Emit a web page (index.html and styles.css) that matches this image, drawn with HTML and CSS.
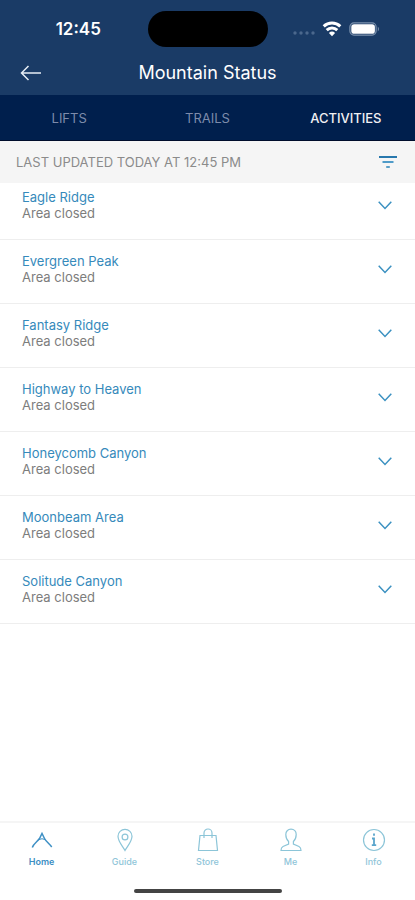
FILE: index.html
```html
<!DOCTYPE html>
<html lang="en">
<head>
<meta charset="utf-8">
<meta name="viewport" content="width=device-width, initial-scale=1">
<title>Mountain Status</title>
<link rel="stylesheet" href="styles.css">
</head>
<body>
<header class="header">
  <div class="status">
    <span class="clock">12:45</span>
    <span class="island"></span>
    <span class="indicators">
      <svg class="signal" viewBox="0 0 22 6" width="22" height="6"><g fill="#4b688d"><circle cx="2" cy="3" r="1.7"/><circle cx="8" cy="3" r="1.7"/><circle cx="14" cy="3" r="1.7"/><circle cx="20" cy="3" r="1.7"/></g></svg>
      <svg viewBox="0 0 20 16" width="20" height="16" fill="none" stroke="#fff" stroke-width="3"><path d="M1.700 5.400a12 12 0 0 1 16.600 0"/><path d="M4.700 9.200a7.700 7.700 0 0 1 10.600 0"/><path d="M10 15.200 6.900 12a4.500 4.500 0 0 1 6.200 0z" fill="#fff" stroke="none"/></svg>
      <svg viewBox="0 0 32 14" width="32" height="14"><rect x=".9" y=".9" width="26.2" height="12.2" rx="4" fill="none" stroke="#7c92ae" stroke-width="1.2"/><rect x="2.3" y="2.3" width="23.6" height="9.4" rx="2.8" fill="#fff"/><path d="M28.8 4.500q2.400 2.500 0 5z" fill="#7c92ae"/></svg>
    </span>
  </div>
  <div class="titlebar">
    <button class="back" type="button" aria-label="Back"><svg viewBox="0 0 22 16" width="22" height="16" fill="none" stroke="#e6edf5" stroke-width="1.5"><path d="M21 8H1.500M8.500 1 1.500 8l7 7"/></svg></button>
    <h1>Mountain Status</h1>
  </div>
</header>
<nav class="tabs" aria-label="Status type">
  <button type="button">LIFTS</button>
  <button type="button">TRAILS</button>
  <button type="button" class="selected">ACTIVITIES</button>
</nav>
<div class="updated">
  <span>LAST UPDATED TODAY AT 12:45 PM</span>
  <button type="button" aria-label="Filter"><svg viewBox="0 0 18 14" width="18" height="14" fill="none" stroke-width="2"><path stroke="#2878ad" d="M0 2h18"/><path stroke="#4f9bc8" d="M3.500 7h11"/><path stroke="#5b9fc6" d="M7.200 12h3.600"/></svg></button>
</div>
<main>
  <ul class="areas">
    <li><button type="button"><span class="area"><span class="name">Eagle Ridge</span><span>Area closed</span></span><svg class="chevron" viewBox="0 0 14 9" width="14" height="9"><path d="m.7.8 6.3 6.7L13.3.8"/></svg></button></li>
    <li><button type="button"><span class="area"><span class="name">Evergreen Peak</span><span>Area closed</span></span><svg class="chevron" viewBox="0 0 14 9" width="14" height="9"><path d="m.7.8 6.3 6.7L13.3.8"/></svg></button></li>
    <li><button type="button"><span class="area"><span class="name">Fantasy Ridge</span><span>Area closed</span></span><svg class="chevron" viewBox="0 0 14 9" width="14" height="9"><path d="m.7.8 6.3 6.7L13.3.8"/></svg></button></li>
    <li><button type="button"><span class="area"><span class="name">Highway to Heaven</span><span>Area closed</span></span><svg class="chevron" viewBox="0 0 14 9" width="14" height="9"><path d="m.7.8 6.3 6.7L13.3.8"/></svg></button></li>
    <li><button type="button"><span class="area"><span class="name">Honeycomb Canyon</span><span>Area closed</span></span><svg class="chevron" viewBox="0 0 14 9" width="14" height="9"><path d="m.7.8 6.3 6.7L13.3.8"/></svg></button></li>
    <li><button type="button"><span class="area"><span class="name">Moonbeam Area</span><span>Area closed</span></span><svg class="chevron" viewBox="0 0 14 9" width="14" height="9"><path d="m.7.8 6.3 6.7L13.3.8"/></svg></button></li>
    <li><button type="button"><span class="area"><span class="name">Solitude Canyon</span><span>Area closed</span></span><svg class="chevron" viewBox="0 0 14 9" width="14" height="9"><path d="m.7.8 6.3 6.7L13.3.8"/></svg></button></li>
  </ul>
</main>
<footer class="footer">
  <nav class="bottom" aria-label="Main">
    <a href="#home" class="current"><svg viewBox="0 0 24 24" width="24" height="24"><path d="M2.300 19.500C3.500 15.500 7.500 13.500 9.500 10.500L12 5.500l2.500 5c1.500 3 5 5 7.200 8.500"/><path d="M9 11.500q3-1.500 6 0" stroke-width="1"/></svg>Home</a>
    <a href="#guide"><svg viewBox="0 0 24 24" width="24" height="24"><path d="M12 22.500C9.500 18 5 13.500 5 8.300a7 7 0 0 1 14 0c0 5.200-4.500 9.700-7 14.200z"/><circle cx="12" cy="9" r="2.900"/></svg>Guide</a>
    <a href="#store"><svg viewBox="0 0 24 24" width="24" height="24"><path d="M4 7.500h16l1.500 15h-19z"/><path d="M8 10V5a4 4 0 0 1 8 0v5"/></svg>Store</a>
    <a href="#me"><svg viewBox="0 0 24 24" width="24" height="24"><path d="M9.600 13.500C7.500 11.500 6.800 9 6.800 6.500c0-3 2-5.300 5.200-5.300s5.200 2.300 5.200 5.300c0 2.500-.7 5-2.800 7v2.500l5.600 2.500q2 1 2 4H2q0-3 2-4l5.600-2.500z"/></svg>Me</a>
    <a href="#info"><svg viewBox="0 0 24 24" width="24" height="24"><circle cx="12" cy="12" r="10.500"/><path class="letter" d="M12 5.500v2.200M10 10.500h2v6.700M9.800 17.200h4.400"/></svg>Info</a>
  </nav>
  <div class="grip"></div>
</footer>
</body>
</html>
```
FILE: styles.css
```css
* { box-sizing: border-box; }

body {
  display: flex;
  flex-direction: column;
  min-height: 100vh;
  margin: 0;
  background: #fff;
  color: #7d7d7d;
  font: 13px/16px Inter, "Liberation Sans", sans-serif;
}

button {
  padding: 0;
  border: 0;
  background: none;
  color: inherit;
  font: inherit;
  cursor: pointer;
}

svg { display: block; flex: none; }

.header {
  padding-top: 11px;
  background: #1a3b66;
  color: #fff;
}

.status {
  display: grid;
  grid-template-columns: 1fr 120px 1fr;
  align-items: center;
}

.clock {
  padding-left: 9px;
  text-align: center;
  font-size: 17px;
  font-weight: 600;
}

.island {
  height: 36px;
  border-radius: 18px;
  background: #000;
}

.indicators {
  display: flex;
  align-items: center;
  justify-content: flex-end;
  gap: 7px;
  padding-right: 34px;
}

.signal { margin-top: 8px; }

.titlebar {
  display: grid;
  grid-template-columns: 44px 1fr 44px;
  align-items: center;
  height: 48px;
  padding-top: 4px;
}

.back { padding-left: 20px; }

h1 {
  margin: 0;
  text-align: center;
  font-size: 18px;
  line-height: 24px;
  font-weight: 400;
}

.tabs {
  display: grid;
  grid-template-columns: repeat(3, 1fr);
  height: 46px;
  border-bottom: 1px solid #000d2c;
  background: #001f4d;
  color: #7d8bab;
}

.tabs .selected {
  color: #f0f0f3;
  font-weight: 500;
}

.updated {
  display: flex;
  align-items: center;
  justify-content: space-between;
  height: 42px;
  padding: 0 18px 0 16px;
  background: #f5f5f5;
  color: #8b8b8b;
}

main { flex: 1; }

.areas {
  margin: 0;
  padding: 0;
  list-style: none;
}

.areas li {
  height: 64px;
  border-bottom: 1px solid #eee;
}

.areas li:first-child { height: 57px; }

.areas button {
  display: flex;
  align-items: center;
  justify-content: space-between;
  width: 100%;
  height: 100%;
  padding: 0 23px 5px 22px;
  text-align: left;
}

.areas li:first-child button { padding-bottom: 12px; }

.area { display: grid; }

.name { color: #368abb; }

.chevron {
  fill: none;
  stroke: #3b91c1;
  stroke-width: 1.5;
}

.footer {
  padding-bottom: 7px;
  border-top: 2px solid #f5f5f5;
}

.bottom {
  display: grid;
  grid-template-columns: repeat(5, 1fr);
}

.bottom a {
  display: flex;
  flex-direction: column;
  align-items: center;
  gap: 4px;
  padding-top: 5px;
  color: #8fc5d9;
  font: 500 9px/12px Inter, "Liberation Sans", sans-serif;
  text-decoration: none;
}

.bottom svg {
  fill: none;
  stroke: #8cc5d8;
  stroke-width: 1.2;
}

.bottom .current {
  color: #3d8fc4;
  font-weight: 600;
}

.bottom .current svg {
  stroke: #3d8fc4;
  stroke-width: 1.5;
}

.bottom .letter {
  stroke: #5aa5cc;
  stroke-width: 1.8;
}

.grip {
  width: 148px;
  height: 4px;
  margin: 21px auto 0;
  border-radius: 2px;
  background: #444;
}
```
